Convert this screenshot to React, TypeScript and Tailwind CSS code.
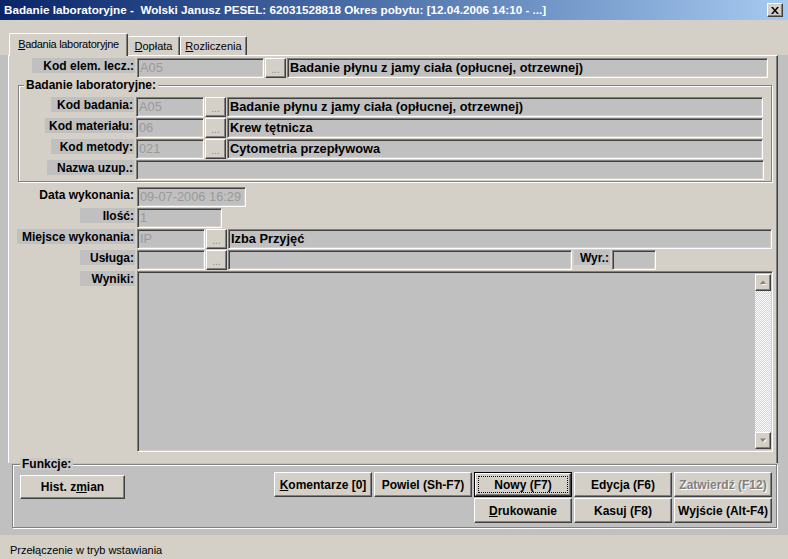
import React from "react";

const sunken =
  "bg-[#c0c0c0] border border-[#808080] border-r-white border-b-white shadow-[inset_1px_1px_0_#404040,inset_-1px_-1px_0_#d4d0c8]";
const raised =
  "bg-[#d4d0c8] border border-white border-r-[#404040] border-b-[#404040] shadow-[inset_-1px_-1px_0_#808080]";
const etched = "border border-[#808080] shadow-[inset_1px_1px_0_#fff,1px_1px_0_#fff]";

function Label({ text, w }: { text: string; w: string }) {
  return (
    <div className={`h-[15px] bg-[#c0c0c0] flex items-center justify-end pr-[1px] font-bold text-[12px] leading-none text-black whitespace-nowrap ${w}`}>
      {text}
    </div>
  );
}

function Field({ w, value, desc, h = "h-[20px]" }: { w: string; value?: string; desc?: boolean; h?: string }) {
  return (
    <div
      className={`${sunken} ${w} ${h} flex items-center pl-[2px] overflow-hidden whitespace-nowrap text-[12.8px] leading-none ${
        desc ? "font-bold text-black" : "text-[#9a9a9a]"
      }`}
    >
      {value}
    </div>
  );
}

function Dots() {
  return (
    <div className={`${raised} w-[21px] h-[20px] flex items-end justify-center pb-[2px] text-[10px] leading-none text-[#8a8a8a]`}>
      ...
    </div>
  );
}

function Btn({ children, w = "w-[98px]", h = "h-[25px]", disabled, isDefault }: { children: React.ReactNode; w?: string; h?: string; disabled?: boolean; isDefault?: boolean }) {
  const text = disabled ? "text-[#808080] [text-shadow:1px_1px_0_#fff]" : "text-black";
  if (isDefault) {
    return (
      <div className={`${w} ${h} border border-black`}>
        <div className={`${raised} w-full h-full flex items-center justify-center p-[2px]`}>
          <div className="w-full h-full border border-dotted border-black flex items-center justify-center font-bold text-[12px] leading-none">
            {children}
          </div>
        </div>
      </div>
    );
  }
  return (
    <div className={`${raised} ${w} ${h} flex items-center justify-center font-bold text-[12px] leading-none whitespace-nowrap ${text}`}>
      {children}
    </div>
  );
}

function Arrow({ up }: { up?: boolean }) {
  return (
    <div className={`${raised} w-[16px] h-[17px] flex items-center justify-center`}>
      <svg width="8" height="5" viewBox="0 0 8 5">
        {up ? (
          <>
            <polygon points="1,5 4,1 7,5" fill="#fff" transform="translate(1,1)" />
            <polygon points="1,4 4,0.5 7,4" fill="#808080" />
          </>
        ) : (
          <>
            <polygon points="1,1 4,4.5 7,1" fill="#fff" transform="translate(1,0.5)" />
            <polygon points="1,0.5 4,4 7,0.5" fill="#808080" />
          </>
        )}
      </svg>
    </div>
  );
}

export default function App() {
  return (
    <div className="w-[788px] h-[559px] flex flex-col overflow-hidden bg-[#c0c0c0] font-['Liberation_Sans',Arial,sans-serif] select-none">
      {/* title bar */}
      <div className="h-[20px] flex items-center justify-between pl-[4px] pr-[5px] bg-gradient-to-r from-[#0a246a] to-[#a6caf0]">
        <span className="text-white font-bold text-[11.7px] leading-none whitespace-pre">
          Badanie laboratoryjne -  Wolski Janusz PESEL: 62031528818 Okres pobytu: [12.04.2006 14:10 - ...]
        </span>
        <div className={`${raised} w-[16px] h-[14px] flex items-center justify-center`}>
          <svg width="8" height="7" viewBox="0 0 8 7">
            <path d="M0 0h2l2 2.5L6 0h2L5 3.5 8 7H6L4 4.5 2 7H0l3-3.5z" fill="#000" />
          </svg>
        </div>
      </div>

      {/* tabs */}
      <div className="h-[35px] bg-[#d4d0c8] flex items-end pl-[9px]">
        <div className="relative z-10 mb-[-1px] w-[119px] h-[23px] bg-[#d4d0c8] border-t border-l border-white border-r border-r-[#404040] shadow-[inset_-1px_0_0_#808080] rounded-t-[2px] flex items-center justify-center text-[11px] tracking-[-0.3px] pb-[2px]">
          <span>
            <span className="underline">B</span>adania laboratoryjne
          </span>
        </div>
        <div className="w-[52px] h-[19px] border-t border-white border-r border-r-[#404040] shadow-[inset_-1px_0_0_#808080] rounded-t-[2px] flex items-center justify-center text-[11px] pt-[1px]">
          <span>
            <span className="underline">D</span>opłata
          </span>
        </div>
        <div className="w-[67px] h-[19px] border-t border-l border-white border-r border-r-[#404040] shadow-[inset_-1px_0_0_#808080] rounded-t-[2px] flex items-center justify-center text-[11px] pt-[1px]">
          <span>
            <span className="underline">R</span>ozliczenia
          </span>
        </div>
      </div>

      {/* tab panel */}
      <div className="h-[408px] flex">
        <div className="ml-[8px] w-[770px] h-full bg-[#d4d0c8] border-t border-l border-white border-r border-r-[#404040] shadow-[inset_-1px_0_0_#808080] flex flex-col">
          {/* Kod elem. lecz. */}
          <div className="flex items-start gap-[2px] mt-[2px]">
            <div className="w-[126px] flex justify-end">
              <Label text="Kod elem. lecz.:" w="w-[103px]" />
            </div>
            <div className="flex gap-[1px]">
              <Field w="w-[127px]" value="A05" />
              <Dots />
              <Field w="w-[481px]" value="Badanie płynu z jamy ciała (opłucnej, otrzewnej)" desc />
            </div>
          </div>

          {/* group box */}
          <div className={`relative ml-[9px] mt-[7px] w-[754px] ${etched} flex flex-col gap-[1px] pt-[11px] pb-[1px]`}>
            <div className="absolute left-[5px] -top-[7px] px-[2px] bg-[#d4d0c8] font-bold text-[12px] leading-none">
              Badanie laboratoryjne:
            </div>
            {[
              ["Kod badania:", "w-[83px]", "A05", "Badanie płynu z jamy ciała (opłucnej, otrzewnej)"],
              ["Kod materiału:", "w-[89px]", "06", "Krew tętnicza"],
              ["Kod metody:", "w-[83px]", "021", "Cytometria przepływowa"],
            ].map(([l, w, v, d]) => (
              <div key={l} className="flex items-start gap-[2px]">
                <div className="w-[115px] flex justify-end">
                  <Label text={l} w={w} />
                </div>
                <div className="flex gap-[1px]">
                  <Field w="w-[68px]" value={v} />
                  <Dots />
                  <Field w="w-[536px]" value={d} desc />
                </div>
              </div>
            ))}
            <div className="flex items-start gap-[2px]">
              <div className="w-[115px] flex justify-end">
                <Label text="Nazwa uzup.:" w="w-[87px]" />
              </div>
              <Field w="w-[628px]" />
            </div>
          </div>

          {/* rest */}
          <div className="flex flex-col gap-[1px] mt-[5px]">
            <div className="flex items-start gap-[2px]">
              <div className="w-[126px] flex justify-end">
                <div className="h-[15px] flex items-center justify-end pr-[1px] font-bold text-[12px] leading-none">Data wykonania:</div>
              </div>
              <Field w="w-[109px]" value="09-07-2006 16:29" />
            </div>
            <div className="flex items-start gap-[2px]">
              <div className="w-[126px] flex justify-end">
                <Label text="Ilość:" w="w-[55px]" />
              </div>
              <Field w="w-[85px]" value="1" />
            </div>
            <div className="flex items-start gap-[2px]">
              <div className="w-[126px] flex justify-end">
                <Label text="Miejsce wykonania:" w="w-[118px]" />
              </div>
              <div className="flex gap-[1px]">
                <Field w="w-[68px]" value="IP" />
                <Dots />
                <Field w="w-[544px]" value="Izba Przyjęć" desc />
              </div>
            </div>
            <div className="flex items-start gap-[2px]">
              <div className="w-[126px] flex justify-end">
                <Label text="Usługa:" w="w-[55px]" />
              </div>
              <div className="flex gap-[1px]">
                <Field w="w-[68px]" />
                <Dots />
                <Field w="w-[344px]" />
              </div>
              <Label text="Wyr.:" w="w-[36px]" />
              <Field w="w-[44px]" />
            </div>
            <div className="flex items-start gap-[2px]">
              <div className="w-[126px] flex justify-end">
                <Label text="Wyniki:" w="w-[55px]" />
              </div>
              <div className={`${sunken} w-[636px] h-[181px] flex justify-end p-[2px] pr-[1px]`}>
                <div className="w-[16px] h-full flex flex-col justify-between bg-[image:repeating-conic-gradient(#ffffff_0%_25%,#d4d0c8_0%_50%)] bg-size-[2px_2px]">
                  <Arrow up />
                  <Arrow />
                </div>
              </div>
            </div>
          </div>
        </div>
      </div>

      {/* Funkcje */}
      <div className="h-[72px] pl-[12px] pt-[1px]">
        <div className={`relative w-[765px] h-[64px] ${etched} flex items-start`}>
          <div className="absolute left-[7px] -top-[7px] px-[2px] bg-[#c8c8c8] font-bold text-[12px] leading-none">Funkcje:</div>
          <div className="ml-[7px] mt-[10px]">
            <Btn w="w-[105px]" h="h-[24px]">
              <span>
                Hist. z<span className="underline">m</span>ian
              </span>
            </Btn>
          </div>
          <div className="ml-auto mr-[4px] mt-[7px] grid grid-cols-[98px_98px_98px_98px_98px] gap-x-[2px] gap-y-[1px]">
            <Btn>
              <span>
                <span className="underline">K</span>omentarze [0]
              </span>
            </Btn>
            <Btn>Powiel (Sh-F7)</Btn>
            <Btn isDefault>Nowy (F7)</Btn>
            <Btn>Edycja (F6)</Btn>
            <Btn disabled>Zatwierdź (F12)</Btn>
            <div className="col-start-3">
              <Btn>
                <span>
                  <span className="underline">D</span>rukowanie
                </span>
              </Btn>
            </div>
            <Btn>Kasuj (F8)</Btn>
            <Btn>Wyjście (Alt-F4)</Btn>
          </div>
        </div>
      </div>

      {/* status bar */}
      <div className="h-[24px] bg-[#d4d0c8] flex items-center pl-[10px] pt-[6px] text-[11px] leading-none">
        Przełączenie w tryb wstawiania
      </div>
    </div>
  );
}
